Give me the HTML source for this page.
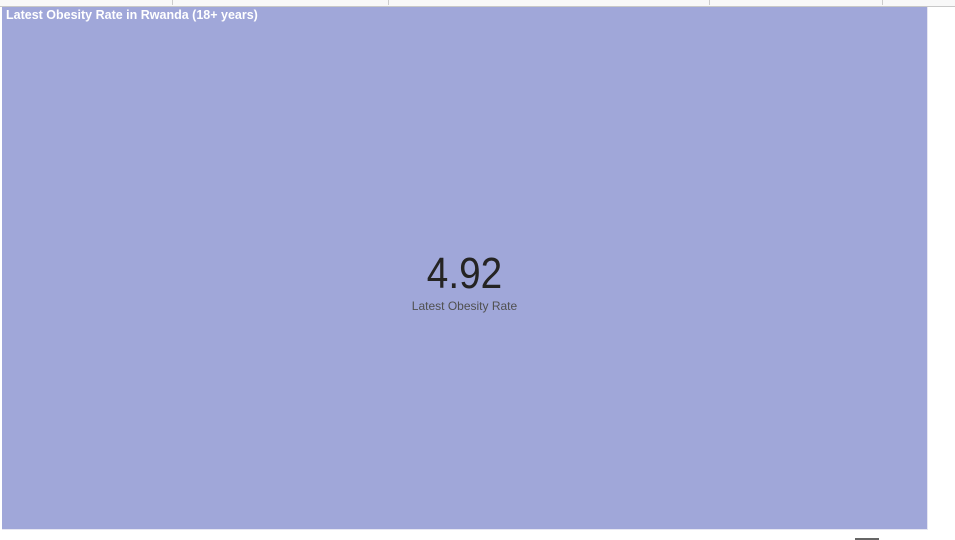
<!DOCTYPE html>
<html><head><style>
body{margin:0;width:955px;height:540px;background:#fff;position:relative;overflow:hidden;font-family:"Liberation Sans",sans-serif}
.top{position:absolute;left:0;top:0;width:955px;height:6px;background:#f8f8f8;border-bottom:1px solid #c8c8c8}
.sep{position:absolute;top:0;width:1px;height:5px;background:#ccc}
.card{position:absolute;left:2px;top:7px;width:925px;height:522px;background:#a0a7d9;border-right:1px solid #e6e6f2;border-bottom:1px solid #e6e6f2}
.title{position:absolute;left:4px;top:1px;color:#fff;font-size:12.5px;font-weight:bold;white-space:nowrap}
.val{position:absolute;left:0;width:925px;text-align:center;top:242px;font-size:44px;color:#252423;line-height:50px;transform:scaleX(0.88)}
.lbl{position:absolute;left:0;width:925px;text-align:center;top:292px;font-size:12px;color:#505050}
</style></head><body>
<div class="top"><div class="sep" style="left:172px"></div><div class="sep" style="left:388px"></div><div class="sep" style="left:709px"></div><div class="sep" style="left:882px"></div></div>
<div class="card"><div class="title">Latest Obesity Rate in Rwanda (18+ years)</div>
<div class="val">4.92</div><div class="lbl">Latest Obesity Rate</div></div>
<div style="position:absolute;left:855px;top:538px;width:24px;height:2px;background:#666"></div>
</body></html>
